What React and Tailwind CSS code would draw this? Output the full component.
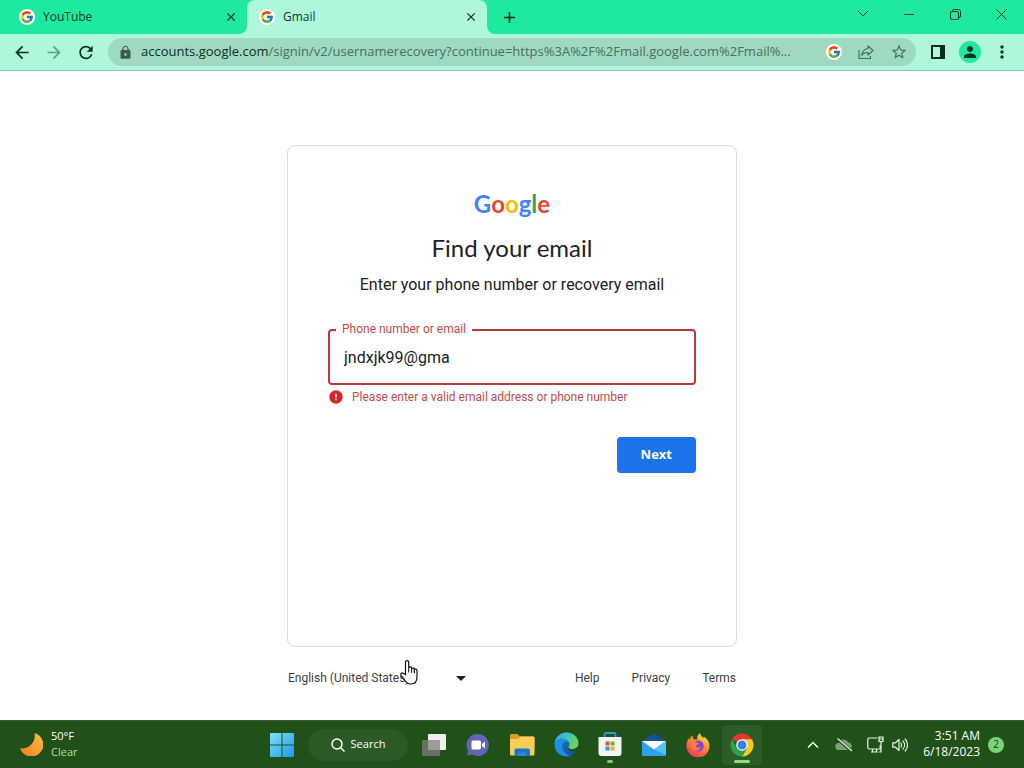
import { useState } from "react";
import { FcGoogle } from "react-icons/fc";
import {
  MdArrowBack,
  MdArrowForward,
  MdRefresh,
  MdLock,
  MdStarOutline,
  MdPerson,
  MdMoreVert,
  MdClose,
  MdAdd,
  MdError,
} from "react-icons/md";

const uiFont = "font-['Open_Sans','Noto_Sans',sans-serif]";
const pageFont = "font-[Roboto,'Liberation_Sans',sans-serif]";

function Favicon() {
  return (
    <span className="flex size-4 shrink-0 items-center justify-center rounded-full bg-white">
      <FcGoogle size={14} />
    </span>
  );
}

function Tab({ title, active }) {
  return (
    <div className={`relative flex h-full max-w-60 flex-1 items-center pl-3 pr-2 ${active ? "rounded-t-lg bg-[#aff7da]" : ""}`}>
      {active && (
        <>
          <svg className="absolute bottom-0 -left-2 size-2 fill-[#aff7da]" viewBox="0 0 8 8">
            <path d="M8 0v8H0a8 8 0 0 0 8-8z" />
          </svg>
          <svg className="absolute bottom-0 -right-2 size-2 fill-[#aff7da]" viewBox="0 0 8 8">
            <path d="M0 0v8h8a8 8 0 0 1-8-8z" />
          </svg>
        </>
      )}
      <Favicon />
      <span className="ml-2 flex-1 truncate text-xs text-[#0b3d2a]">{title}</span>
      <button aria-label={`Close ${title}`} className="flex size-4 items-center justify-center text-[#062a1c]">
        <MdClose size={14} />
      </button>
    </div>
  );
}

function TitleBar() {
  return (
    <div className="flex h-[34px] bg-[#1fe99f] pl-[7px]">
      <Tab title="YouTube" />
      <Tab title="Gmail" active />
      <button aria-label="New tab" className="ml-3 flex w-5 items-center justify-center text-[#062a1c]">
        <MdAdd size={19} />
      </button>
      <div className="ml-auto flex h-7 text-[#0a3c28]">
        <button aria-label="Search tabs" className="flex w-[46px] items-center justify-center">
          <svg width="12" height="8" viewBox="0 0 12 8" fill="none" stroke="currentColor">
            <path d="M1 1l5 5 5-5" />
          </svg>
        </button>
        <button aria-label="Minimize" className="flex w-[46px] items-center justify-center">
          <svg width="10" height="10" viewBox="0 0 10 10" stroke="currentColor">
            <path d="M0 5.5h10" />
          </svg>
        </button>
        <button aria-label="Restore" className="flex w-[46px] items-center justify-center">
          <svg width="11" height="11" viewBox="0 0 11 11" fill="none" stroke="currentColor">
            <rect x=".5" y="2.5" width="8" height="8" rx="1.5" />
            <path d="M2.5 2.5V2A1.5 1.5 0 0 1 4 .5h4.5a2 2 0 0 1 2 2V7A1.5 1.5 0 0 1 9 8.5h-.5" />
          </svg>
        </button>
        <button aria-label="Close window" className="flex w-[46px] items-center justify-center">
          <svg width="11" height="11" viewBox="0 0 11 11" stroke="currentColor">
            <path d="M.5.5l10 10M10.5.5l-10 10" />
          </svg>
        </button>
      </div>
    </div>
  );
}

function Toolbar() {
  return (
    <div className="flex h-[37px] items-center border-b border-[#8fc9b0] bg-[#aff7da] px-3 text-[#0a2e20]">
      <div className="flex gap-3">
        <button aria-label="Back" className="flex w-5 justify-center"><MdArrowBack size={21} /></button>
        <button aria-label="Forward" className="flex w-5 justify-center text-[#62a086]"><MdArrowForward size={21} /></button>
        <button aria-label="Reload" className="flex w-5 justify-center"><MdRefresh size={21} /></button>
      </div>
      <div className="mx-3 flex h-7 min-w-0 flex-1 items-center rounded-full bg-[#9fd9c0] pl-2.5 pr-2">
        <MdLock size={15} className="shrink-0 text-[#3c5a4e]" />
        <p className="ml-2 min-w-0 flex-1 truncate text-[13px] text-[#46705f]">
          <span className="text-[#0c3023]">accounts.google.com</span>
          /signin/v2/usernamerecovery?continue=https%3A%2F%2Fmail.google.com%2Fmail%...
        </p>
        <div className="ml-2 flex items-center gap-4 text-[#3f7460]">
          <Favicon />
          <button aria-label="Share">
            <svg width="16" height="16" viewBox="0 0 16 16" fill="none" stroke="currentColor" strokeWidth="1.2" strokeLinejoin="round">
              <path d="M1 6v8.5h11.500V12" />
              <path d="M10 2l5 4.500-5 4.500V8.500C7 8.400 5 9.500 3.800 11.500 4.200 8 6 5 10 4.500z" />
            </svg>
          </button>
          <button aria-label="Bookmark this page"><MdStarOutline size={18} /></button>
        </div>
      </div>
      <div className="flex items-center gap-[11px]">
        <button aria-label="Side panel" className="flex w-5 justify-center">
          <svg width="14" height="14" viewBox="0 0 14 14">
            <rect x="1" y="1" width="12" height="12" fill="none" stroke="currentColor" strokeWidth="2" />
            <path d="M9 1h4v12H9z" fill="currentColor" />
          </svg>
        </button>
        <button aria-label="Profile" className="flex size-[22px] items-center justify-center rounded-full bg-[#1fe99f]">
          <MdPerson size={18} />
        </button>
        <button aria-label="Menu" className="flex w-5 justify-center"><MdMoreVert size={20} /></button>
      </div>
    </div>
  );
}

function GoogleLogo() {
  return (
    <p className="text-center font-[Lato,sans-serif] text-2xl leading-5 font-bold text-[#4285f4]" aria-label="Google">
      <span>G</span>
      <span className="text-[#ea4335]">o</span>
      <span className="text-[#fbbc05]">o</span>
      <span>g</span>
      <span className="text-[#34a853]">l</span>
      <span className="text-[#ea4335]">e</span>
    </p>
  );
}

function HandCursor() {
  return (
    <svg className="pointer-events-none absolute -top-2.5 left-28 z-10" width="18" height="25" viewBox="0 0 18 25">
      <path
        d="M5.500 14.500V2.300a1.600 1.600 0 0 1 3.200 0v5.500a1.500 1.500 0 0 1 2.900.4v.6a1.500 1.500 0 0 1 2.800.5v.5a1.400 1.400 0 0 1 2.600.8V17c0 4-2.200 7-6.200 7-3.400 0-4.800-1.600-6.300-4.200L1.200 15.600c-1.200-2 .8-3.400 2.300-2z"
        fill="#fff"
        stroke="#111"
        strokeWidth="1.2"
      />
      <path d="M8.700 7.500v5M11.600 8.500v4.500M14.400 9.500v4" stroke="#111" fill="none" />
    </svg>
  );
}

function RecoveryPage() {
  const [email, setEmail] = useState("jndxjk99@gma");

  return (
    <main className={`flex flex-1 justify-center bg-white px-4 pt-[74px] pb-8 ${pageFont}`}>
      <div className="w-full max-w-[450px]">
        <form className="min-h-[502px] rounded-lg border border-[#dadce0] px-10 py-12" onSubmit={(e) => e.preventDefault()}>
          <GoogleLogo />
          <h1 className="mt-5 text-center font-[Lato,sans-serif] text-2xl leading-7 text-[#202124]">Find your email</h1>
          <p className="mt-[11px] text-center text-base text-[#202124]">Enter your phone number or recovery email</p>
          <div className="relative mt-8">
            <input
              id="identifier"
              type="text"
              value={email}
              onChange={(e) => setEmail(e.target.value)}
              className="h-14 w-full rounded border-2 border-[#b93a3c] px-3.5 text-base text-[#202124] outline-none"
            />
            <label htmlFor="identifier" className="absolute -top-2 left-2 bg-white px-1.5 text-xs text-[#c04a4c]">
              Phone number or email
            </label>
          </div>
          <p className="mt-1 flex items-center gap-2 text-xs text-[#c04a4c]">
            <MdError size={16} className="text-[#d0282c]" />
            Please enter a valid email address or phone number
          </p>
          <div className="mt-8 flex justify-end">
            <button type="submit" className="h-9 rounded bg-[#1a73e8] px-6 font-['Open_Sans',sans-serif] text-[13px] font-bold text-white">
              Next
            </button>
          </div>
        </form>
        <div className="mt-[23px] flex items-center justify-between px-px text-xs text-[#3c4043]">
          <div className="relative flex w-[180px] items-center">
            <select aria-label="Language" className="w-full appearance-none outline-none">
              <option>English (United States)</option>
            </select>
            <svg className="pointer-events-none absolute right-0.5 fill-[#202124]" width="10" height="5" viewBox="0 0 10 5">
              <path d="M0 0h10L5 5z" />
            </svg>
            <HandCursor />
          </div>
          <nav className="flex gap-8">
            <a href="#help">Help</a>
            <a href="#privacy">Privacy</a>
            <a href="#terms">Terms</a>
          </nav>
        </div>
      </div>
    </main>
  );
}

function WindowsIcon() {
  return (
    <svg width="24" height="24" viewBox="0 0 24 24">
      <defs>
        <linearGradient id="win" x1="0" y1="0" x2="1" y2="1">
          <stop offset="0" stopColor="#83defa" />
          <stop offset="1" stopColor="#1a9bea" />
        </linearGradient>
      </defs>
      <path fill="url(#win)" d="M1 0h10.500v11.500H0V1a1 1 0 0 1 1-1zM12.500 0H23a1 1 0 0 1 1 1v10.500H12.500zM0 12.500h11.500V24H1a1 1 0 0 1-1-1zM12.500 12.500H24V23a1 1 0 0 1-1 1H12.500z" />
    </svg>
  );
}

function TaskViewIcon() {
  return (
    <svg width="24" height="22" viewBox="0 0 24 22">
      <rect x="6" y="0" width="18" height="16" rx="1" fill="#eef0ee" />
      <rect x="0" y="6" width="18" height="16" rx="1" fill="#6a7068" />
      <rect x="6" y="6" width="12" height="10" fill="#999e98" />
    </svg>
  );
}

function ChatIcon() {
  return (
    <svg width="24" height="24" viewBox="0 0 24 24">
      <path d="M12 1a11 11 0 1 1-5.500 20.600L1 22.500l1-5A11 11 0 0 1 12 1z" fill="#6264b8" />
      <rect x="5.500" y="7.500" width="9.500" height="9" rx="1.500" fill="#fff" />
      <path d="M16 11l3-2.500v7L16 13z" fill="#fff" />
    </svg>
  );
}

function FolderIcon() {
  return (
    <svg width="25" height="22" viewBox="0 0 25 22">
      <path d="M1.500 0h6l2.500 2.500H23A1.500 1.500 0 0 1 24.500 4v10H0V1.500A1.500 1.500 0 0 1 1.500 0z" fill="#e29b1e" />
      <path d="M0 5h8l2.500-2.500H23A1.500 1.500 0 0 1 24.500 4v16a1.500 1.500 0 0 1-1.500 1.500H1.500A1.500 1.500 0 0 1 0 20z" fill="#fbcc56" />
      <path d="M4.500 22v-6a1.500 1.500 0 0 1 1.500-1.500h12.500A1.500 1.500 0 0 1 20 16v6z" fill="#1976c8" />
      <path d="M8.500 18.500H16V22H8.500z" fill="#2b8ad8" />
    </svg>
  );
}

function EdgeIcon() {
  return (
    <svg width="25" height="25" viewBox="0 0 24 24">
      <defs>
        <linearGradient id="edgeTop" x1="0" y1="0" x2="1" y2=".3">
          <stop offset="0" stopColor="#35a6e0" />
          <stop offset=".5" stopColor="#36c3c8" />
          <stop offset="1" stopColor="#6cd552" />
        </linearGradient>
        <linearGradient id="edgeLow" x1="0" y1="0" x2="1" y2="1">
          <stop offset="0" stopColor="#1b84d8" />
          <stop offset="1" stopColor="#114a8b" />
        </linearGradient>
      </defs>
      <circle cx="12" cy="12" r="11.500" fill="url(#edgeLow)" />
      <path d="M.6 11C1.500 4.500 6.500.5 12 .5c7 0 11.500 5 11.500 10.200 0 3.500-2.700 5.800-6 5.800-2.500 0-3.800-1-3.800-1.800 0-.7 1.100-1 1.100-3 0-2.500-2.800-5.200-6.800-5.200C4.500 6.500 1.500 8.500.6 11z" fill="url(#edgeTop)" />
      <path d="M.6 11C1.500 8.500 4.500 6.500 8 6.500c3 0 5 1.300 6 3-4-1.500-6.500 1.500-6.200 5 .3 4 3.700 7.500 7.700 8.500C7 25 .2 19 .6 11z" fill="#1e8fe0" />
      <path d="M13.700 14.700c0 .8 1.300 1.800 3.800 1.800 2 0 3.600-.7 4.700-2l1.800 1.500-2.500 3-1.500-.8c-3 1.300-7-.7-7-3 0-.4.300-.8.7-.5z" fill="#1f5118" />
    </svg>
  );
}

function StoreIcon() {
  return (
    <svg width="24" height="25" viewBox="0 0 24 25">
      <path d="M6.500 6V2.500A1.500 1.500 0 0 1 8 1h8a1.500 1.500 0 0 1 1.500 1.500V6" fill="none" stroke="#3797d6" strokeWidth="1.8" />
      <path d="M.5 5h23v16a3 3 0 0 1-3 3h-17a3 3 0 0 1-3-3z" fill="#f3f5f7" />
      <path d="M7.500 9.500h4v4h-4z" fill="#e8502f" />
      <path d="M12.500 9.500h4v4h-4z" fill="#7dae2b" />
      <path d="M7.500 14.500h4v4h-4z" fill="#2b9fe0" />
      <path d="M12.500 14.500h4v4h-4z" fill="#f5b321" />
    </svg>
  );
}

function MailIcon() {
  return (
    <svg width="24" height="22" viewBox="0 0 24 22">
      <path d="M0 7L10 .6a4 4 0 0 1 4 0L24 7v3H0z" fill="#14539c" />
      <path d="M0 7l12 8 12-8v13.500A1.500 1.500 0 0 1 22.500 22h-21A1.500 1.500 0 0 1 0 20.500z" fill="#2ca3ec" />
      <path d="M0 7h24l-12 8.500z" fill="#f4fafd" />
      <path d="M12 15.500L24 7v14z" fill="#54c4f5" />
    </svg>
  );
}

function FirefoxIcon() {
  return (
    <svg width="24" height="24" viewBox="0 0 24 24">
      <defs>
        <linearGradient id="fox" x1=".8" y1="0" x2=".2" y2="1">
          <stop offset="0" stopColor="#ffe544" />
          <stop offset=".45" stopColor="#ff8a2a" />
          <stop offset="1" stopColor="#f0305c" />
        </linearGradient>
      </defs>
      <path d="M14 0c.5 2.500 2 3.500 3.500 5.200l.3-1.700C21.500 6 23.500 9 23.500 13A11.500 11.500 0 0 1 .5 13c0-3.500 1-6 2.500-8l.8 2.200C4 5.200 5 3.200 6.500 2.500c0 2 .5 3 2 4.200 1.500-.3 2 .1 3 .1C10.500 4 12 1.500 14 0z" fill="url(#fox)" />
      <circle cx="12.200" cy="13" r="5.500" fill="#8543d6" />
      <path d="M5 9c2-1.500 4-1 5.500.2 1.500.1 2.300.5 2 1.500-.5 1-2.500 1-2.500 2.500 1 2 3.500 1.500 5 .8-.5 2.500-3 4-5.500 3.500C6 17 4 13 5 9z" fill="#ff7a33" />
    </svg>
  );
}

function ChromeIcon() {
  return (
    <svg width="24" height="24" viewBox="0 0 24 24">
      <path d="M12 12L2.040 6.250A11.500 11.500 0 0 1 21.960 6.250z" fill="#e5392f" />
      <path d="M12 6.250h9.960A11.500 11.500 0 0 1 12 23.500l5-8.600z" fill="#fcc81e" />
      <path d="M7 14.900L2.040 6.250A11.500 11.500 0 0 0 12 23.500l5-8.600z" fill="#2aa24c" />
      <circle cx="12" cy="12" r="5.800" fill="#fff" />
      <circle cx="12" cy="12" r="4.500" fill="#3a7de8" />
    </svg>
  );
}

const apps = [
  { name: "Task view", icon: TaskViewIcon },
  { name: "Chat", icon: ChatIcon },
  { name: "File Explorer", icon: FolderIcon },
  { name: "Microsoft Edge", icon: EdgeIcon },
  { name: "Microsoft Store", icon: StoreIcon, open: true },
  { name: "Mail", icon: MailIcon },
  { name: "Firefox", icon: FirefoxIcon },
  { name: "Google Chrome", icon: ChromeIcon, active: true },
];

function Taskbar() {
  return (
    <footer className="grid h-12 grid-cols-[1fr_auto_1fr] items-center border-t border-[#3b5a38] bg-[#1f5118] text-xs text-white">
      <div className="flex items-center gap-2 pl-5">
        <svg width="23" height="23" viewBox="0 0 23 23">
          <defs>
            <linearGradient id="moon" x1="1" y1="0" x2="0" y2="1">
              <stop offset="0" stopColor="#fbc043" />
              <stop offset="1" stopColor="#f07e22" />
            </linearGradient>
          </defs>
          <path d="M14.500 0a12 12 0 1 1-14.500 15.500A13 13 0 0 0 14.500 0z" fill="url(#moon)" />
        </svg>
        <div className="pb-0.5 text-[11px] leading-4">
          <p>50°F</p>
          <p className="text-[#b5dfae]">Clear</p>
        </div>
      </div>
      <div className="flex items-center gap-1">
        <button aria-label="Start" className="flex size-10 items-center justify-center"><WindowsIcon /></button>
        <button className="mx-0.5 flex h-8 w-[100px] items-center justify-center gap-1.5 rounded-full bg-[#2b5a26] text-[11px]">
          <svg width="14" height="14" viewBox="0 0 14 14" fill="none" stroke="#fff" strokeWidth="1.5">
            <circle cx="6" cy="6" r="5" />
            <path d="M9.500 9.500L13.500 13.500" />
          </svg>
          Search
        </button>
        {apps.map(({ name, icon: Icon, open, active }) => (
          <button key={name} aria-label={name} className={`relative flex size-10 items-center justify-center rounded ${active ? "bg-[#2c5d29]" : ""}`}>
            <Icon />
            {open && <span className="absolute bottom-0.5 h-[3px] w-1.5 rounded-full bg-[#8fc48a]" />}
            {active && <span className="absolute bottom-0.5 h-[3px] w-4 rounded-full bg-[#8fdc84]" />}
          </button>
        ))}
      </div>
      <div className="flex items-center justify-end pr-5">
        <button aria-label="Show hidden icons">
          <svg width="12" height="8" viewBox="0 0 12 8" fill="none" stroke="#fff" strokeWidth="1.5">
            <path d="M1 6.500L6 1.500l5 5" />
          </svg>
        </button>
        <svg className="ml-4" width="18" height="14" viewBox="0 0 18 14">
          <path d="M4 12a3.500 3.500 0 0 1-.3-7A5 5 0 0 1 13 4.500a3.800 3.800 0 0 1 .8 7.500z" fill="#7f9f7a" />
          <path d="M2 .5L16.500 13" stroke="#1f5118" strokeWidth="3" />
          <path d="M2.500.5L17 13" stroke="#e4f2e2" strokeWidth="1.3" />
        </svg>
        <svg className="ml-3.5" width="17" height="17" viewBox="0 0 17 17" fill="none" stroke="#e8f5e6" strokeWidth="1.2">
          <path d="M10.500 2H2A1.200 1.200 0 0 0 .8 3.200v8.600A1.200 1.200 0 0 0 2 13h11.200v-4M4 16h7M5.500 13v3M9.500 13v3" />
          <path d="M12 1h4v4.500h-4zM14 5.500V16h-2M12.500 3h3" />
        </svg>
        <svg className="ml-2" width="17" height="14" viewBox="0 0 17 14" fill="none" stroke="#e8f5e6" strokeWidth="1.2" strokeLinejoin="round">
          <path d="M.8 4.800h2.700L7 1.500v11L3.500 9.200H.8z" />
          <path d="M9 5a3.500 3.500 0 0 1 0 4M11 3a6 6 0 0 1 0 8M13.200 1a9 9 0 0 1 0 12" strokeLinecap="round" />
        </svg>
        <div className="ml-3.5 pb-0.5 text-right text-xs leading-4">
          <p>3:51 AM</p>
          <p>6/18/2023</p>
        </div>
        <span className="ml-2 flex size-4 items-center justify-center rounded-full bg-[#7fd07a] text-[10px] text-[#163c12]">2</span>
      </div>
    </footer>
  );
}

export default function App() {
  return (
    <div className={`flex min-h-screen flex-col ${uiFont}`}>
      <TitleBar />
      <Toolbar />
      <RecoveryPage />
      <Taskbar />
    </div>
  );
}
